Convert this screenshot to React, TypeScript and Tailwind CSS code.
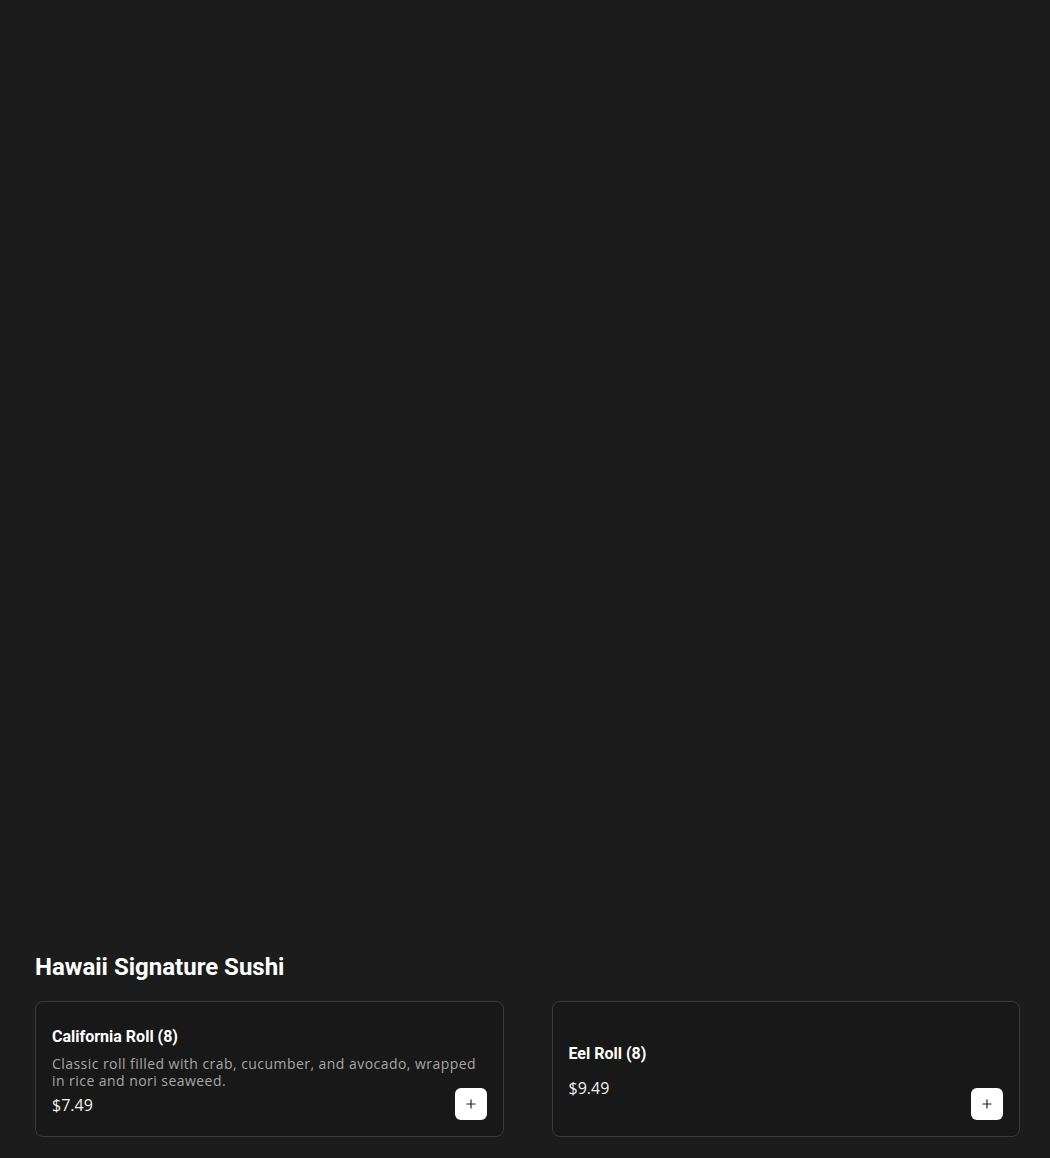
import { Plus } from "lucide-react";

type Item = {
  name: string;
  description?: string;
  price: string;
};

const items: Item[] = [
  {
    name: "California Roll (8)",
    description:
      "Classic roll filled with crab, cucumber, and avocado, wrapped in rice and nori seaweed.",
    price: "$7.49",
  },
  { name: "Eel Roll (8)", price: "$9.49" },
];

const MenuCard = ({ item }: { item: Item }) => (
  <div className="relative flex min-h-[136px] items-center rounded-lg border border-[#3a3a3a] bg-[#181818] p-4">
    <div className="flex flex-col pt-[6px]">
      <h3 className="mb-2 text-base leading-5 font-bold text-white [font-family:Roboto,sans-serif]">
        {item.name}
      </h3>
      <p className="mb-1 text-sm leading-[17px] tracking-[0.45px] text-[#a6a6a6] [font-family:'Open_Sans',sans-serif]">
        {item.description}
      </p>
      <span className="text-base leading-6 text-[#f2f2f2] [font-family:'Open_Sans',sans-serif]">
        {item.price}
      </span>
    </div>
    <button className="absolute right-4 bottom-4 flex h-8 w-8 items-center justify-center rounded-md bg-white text-[#222]">
      <Plus size={14} strokeWidth={2} />
    </button>
  </div>
);

export default function App() {
  return (
    <div className="min-h-[1158px] bg-[#1c1c1c] [font-family:Roboto,sans-serif]">
      {/* hero area (empty in screenshot) */}
      <div className="h-[951px]" />
      <section className="pr-[30px] pb-[21px] pl-[35px]">
        <h2 className="mb-[18px] text-2xl leading-8 font-bold text-white">
          Hawaii Signature Sushi
        </h2>
        <div className="grid grid-cols-2 gap-12">
          {items.map((item) => (
            <MenuCard key={item.name} item={item} />
          ))}
        </div>
      </section>
    </div>
  );
}
